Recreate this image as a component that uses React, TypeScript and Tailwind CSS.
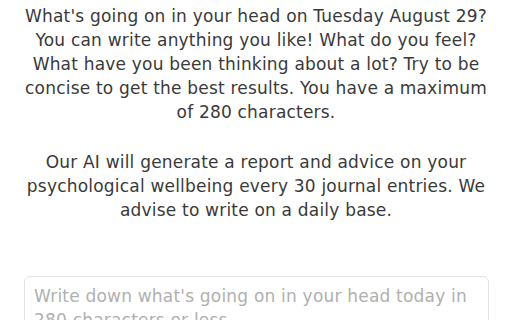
import React from "react";

export default function App() {
  return (
    <div
      className="w-[512px] h-[320px] overflow-hidden bg-white px-6"
      style={{ fontFamily: '"DejaVu Sans", sans-serif' }}
    >
      <div className="pt-[4px] text-center text-[#3a3a3a] text-[17px] leading-[24px] tracking-[0.2px]">
        <p>
          What's going on in your head on Tuesday August 29? You can write anything you like! What do you feel?
          What have you been thinking about a lot? Try to be concise to get the best results. You have a maximum
          of 280 characters.
        </p>
        <p className="mt-[26px]">
          Our AI will generate a report and advice on your psychological wellbeing every 30 journal entries. We
          advise to write on a daily base.
        </p>
      </div>
      <textarea
        className="mt-[54px] block w-[465px] h-[120px] resize-none rounded-md border border-[#e2e2e2] px-[9px] py-[7px] text-[17px] leading-[24px] tracking-[0.2px] text-[#3a3a3a] placeholder:text-[#b0b0b0] outline-none"
        style={{ fontFamily: '"DejaVu Sans", sans-serif' }}
        placeholder="Write down what's going on in your head today in 280 characters or less"
      />
    </div>
  );
}
